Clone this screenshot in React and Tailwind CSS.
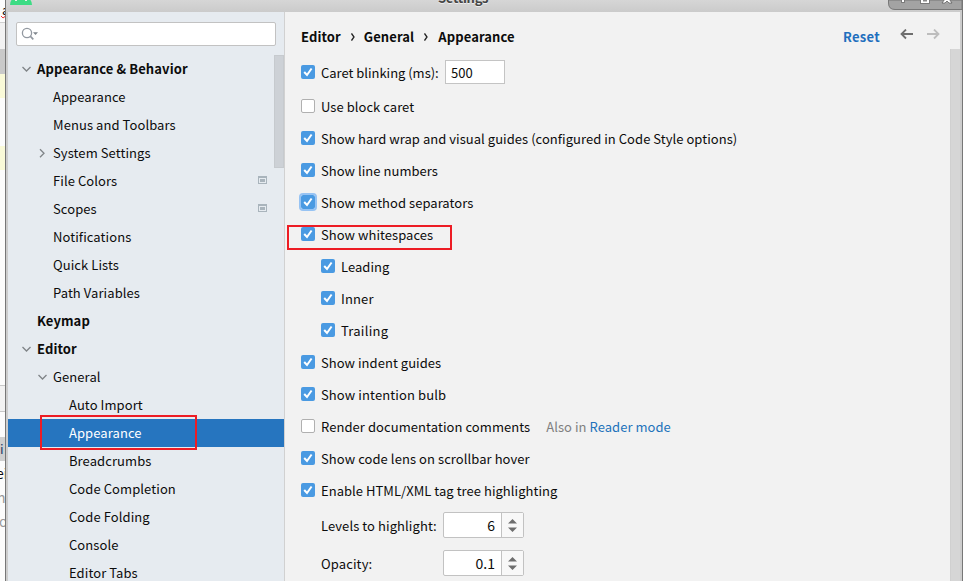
import React from "react";

const tree = [
  { label: "Appearance & Behavior", level: 0, arrow: "down", bold: true },
  { label: "Appearance", level: 1 },
  { label: "Menus and Toolbars", level: 1 },
  { label: "System Settings", level: 1, arrow: "right" },
  { label: "File Colors", level: 1, project: true },
  { label: "Scopes", level: 1, project: true },
  { label: "Notifications", level: 1 },
  { label: "Quick Lists", level: 1 },
  { label: "Path Variables", level: 1 },
  { label: "Keymap", level: 0, bold: true },
  { label: "Editor", level: 0, arrow: "down", bold: true },
  { label: "General", level: 1, arrow: "down" },
  { label: "Auto Import", level: 2 },
  { label: "Appearance", level: 2, selected: true },
  { label: "Breadcrumbs", level: 2 },
  { label: "Code Completion", level: 2 },
  { label: "Code Folding", level: 2 },
  { label: "Console", level: 2 },
  { label: "Editor Tabs", level: 2 },
];

const options = [
  { label: "Use block caret", off: true },
  { label: "Show hard wrap and visual guides (configured in Code Style options)" },
  { label: "Show line numbers" },
  { label: "Show method separators", focus: true },
  { label: "Show whitespaces", marked: true },
  { label: "Leading", nested: true },
  { label: "Inner", nested: true, tracking: "tracking-[0.15px]" },
  { label: "Trailing", nested: true, tracking: "tracking-[0.25px]" },
  { label: "Show indent guides" },
  { label: "Show intention bulb", tracking: "tracking-[0.11px]" },
  { label: "Render documentation comments", off: true, reader: true, tracking: "tracking-[0.07px]" },
  { label: "Show code lens on scrollbar hover", tracking: "tracking-[0.07px]" },
  { label: "Enable HTML/XML tag tree highlighting" },
];

const indent = ["pl-[13px]", "pl-[29px]", "pl-[45px]"];

function Chevron({ dir }) {
  return (
    <svg className="h-[11px] w-[11px] shrink-0" viewBox="0 0 11 11" fill="none" stroke="#7f8487" strokeWidth="1.3">
      {dir === "down" && <path d="M1.5 3 L5.5 7 L9.5 3" />}
      {dir === "right" && <path d="M3 1.2 L7 5.2 L3 9.2" />}
    </svg>
  );
}

function TreeRow({ item }) {
  return (
    <div
      className={`relative flex h-7 shrink-0 items-center ${indent[item.level]} ${
        item.selected ? "bg-[#2675bf] text-white" : "text-[#0c0c0c]"
      }`}
    >
      <Chevron dir={item.arrow} />
      <span className={`ml-[5px] whitespace-nowrap leading-5 ${item.bold ? "font-bold tracking-[0.1px]" : "tracking-[0.08px]"}`}>
        {item.label}
      </span>
      {item.project && (
        <svg className="mr-[17px] mb-[2px] ml-auto h-2 w-[9px]" viewBox="0 0 9 8" shapeRendering="crispEdges">
          <rect width="9" height="8" fill="#a9b4bc" />
          <rect x="1" y="2" width="7" height="5" fill="#e6ebf0" />
          <rect x="2" y="3" width="5" height="3" fill="#a9b4bc" />
        </svg>
      )}
      {item.selected && <div className="absolute top-[-4px] left-8 h-[35px] w-[157px] border-2 border-[#ed1c24]" />}
    </div>
  );
}

function Check({ off, focus }) {
  if (off) return <span className="h-[14px] w-[14px] shrink-0 rounded-[2px] border border-[#b0b0b0] bg-white" />;
  return (
    <span
      className={`flex h-[14px] w-[14px] shrink-0 rounded-[2px] bg-[#4a9ae2] ${
        focus ? "outline-2 outline-[#97c3f3] outline-solid" : ""
      }`}
    >
      <svg className="h-[14px] w-[14px]" viewBox="0 0 14 14" fill="none" stroke="#fff" strokeWidth="2">
        <path d="M3.2 7 L6 10 L10.6 3.5" />
      </svg>
    </span>
  );
}

function Spinner({ value }) {
  return (
    <div className="flex h-[26px] w-[81px] rounded-[2px] border border-[#c2c2c2] bg-white">
      <span className="flex-1 border-r border-[#c2c2c2] pt-[2px] pr-[6px] text-right text-[14px] leading-5">{value}</span>
      <svg className="h-6 w-[21px] bg-[#f8f8f8]" viewBox="0 0 21 24" fill="#6e6e6e">
        <path d="M6 10.5 L10.5 6 L15 10.5 Z M6 14.5 L15 14.5 L10.5 19 Z" />
      </svg>
    </div>
  );
}

function Crumb() {
  return (
    <svg className="mx-[10px] h-2 w-1" viewBox="0 0 4 8" fill="none" stroke="#222" strokeWidth="1.3">
      <path d="M0.5 0.5 L3 4 L0.5 7.5" />
    </svg>
  );
}

/* Sliver of the editor window visible behind the dialog */
function EditorBehind() {
  return (
    <div className="flex w-[5px] shrink-0 flex-col overflow-hidden bg-[#fcfcfc] whitespace-nowrap">
      <div className="relative h-[22px] shrink-0 text-[13px] leading-5">
        <span className="absolute top-0 left-[2px]">a</span>
        <svg className="absolute top-[15px] left-[1px] h-[5px] w-[6px]" viewBox="0 0 6 5" fill="none" stroke="#ef3030">
          <path d="M0 1 L2 3 L4 1.5 L6 4" />
        </svg>
      </div>
      <div className="h-[27px] shrink-0 border-t border-[#d0d0d0] bg-[#f2f2f2]" />
      <div className="h-[25px] shrink-0 bg-[#c9c9c9]" />
      <div className="h-6 shrink-0 bg-[#fafad8]" />
      <div className="h-12 shrink-0" />
      <div className="h-6 shrink-0 bg-[#fafad8]" />
      <div className="h-[215px] shrink-0" />
      <div className="h-[27px] shrink-0 border-y border-[#c8c8c8] bg-[#f2f2f2]" />
      <div className="h-[25px] shrink-0" />
      <div className="h-6 shrink-0 bg-[#cfcfcf] text-[#1c3d66] leading-6">i</div>
      <div className="h-6 shrink-0 text-[14px] leading-6"><span className="-ml-[4px]">ei</span></div>
      <div className="h-6 shrink-0 text-[14px] text-[#999] leading-6"><span className="-ml-[3px]">n</span></div>
      <div className="h-6 shrink-0 text-[14px] text-[#999] leading-6"><span className="-ml-[1px]">o</span></div>
    </div>
  );
}

export default function App() {
  return (
    <div className="flex h-[581px] w-[963px] overflow-hidden bg-[#f2f2f2] font-['Noto_Sans_CJK_SC','Noto_Sans',sans-serif] text-[13px] text-[#0c0c0c]">
      <EditorBehind />
      <div className="flex min-w-0 flex-1 flex-col border-x border-[#777] bg-[#cdcdcd]">
        <header className="relative h-3 shrink-0 overflow-hidden bg-linear-to-b from-[#d6d6d6] to-[#cbcbcb]">
          <svg className="absolute top-0 left-1 h-[5px] w-[22px]" viewBox="0 0 22 5">
            <path d="M0 5 Q0 2 1.5 0 H20.5 Q22 2 22 5 Z" fill="#3ddc84" />
            <path d="M5 0 H7 V1 H5 Z M15 0 H17 V1 H15 Z" fill="#e5f5ec" />
          </svg>
          <span className="absolute top-[-12px] left-[432px] font-bold tracking-[-0.3px] text-[#444] leading-5 text-shadow-[0_1px_0_#eee]">Settings</span>
          <svg className="absolute top-0 right-0 h-[10px] w-[74px]" viewBox="0 0 74 10">
            <path d="M0.5 0 V3 Q0.5 9.5 7 9.5 H74 V0 Z" fill="#a3a3a3" stroke="#777" />
            <g fill="#fff" stroke="#555" strokeWidth="0.7">
              <path d="M13.5 -1 H16.5 V2.5 H13.5 Z" />
              <path d="M32.5 -1 H41.5 V3.5 H32.5 Z" />
              <path d="M54 3 L57 -1 H61 L64 3 H61 L59 1 L57 3 Z" />
            </g>
            <path d="M35 0 H39 V1.5 H35 Z" fill="#888" />
          </svg>
        </header>
        <div className="flex min-h-0 flex-1 pr-[2px] pl-[2px]">
          <aside className="relative flex w-[276px] shrink-0 flex-col overflow-hidden bg-[#e6ebf0]">
            <div className="mx-2 mt-[10px] mb-[9px] flex h-6 shrink-0 items-center rounded-[2px] border border-[#c2c2c2] bg-white pl-1">
              <svg className="h-[14px] w-[18px]" viewBox="0 0 18 14" fill="none" stroke="#9298a0" strokeWidth="1.3">
                <circle cx="6" cy="6" r="4.6" />
                <path d="M9.2 9.2 L12.3 12.3" strokeWidth="1.7" />
                <path d="M12 5.2 H17 L14.5 8 Z" fill="#7f868d" stroke="none" />
              </svg>
            </div>
            {tree.map((item, i) => (
              <TreeRow key={i} item={item} />
            ))}
            <div className="absolute top-[43px] right-0 h-[113px] w-[10px] border border-[#c6cace] bg-[#cdd1d6]" />
          </aside>
          <main className="flex min-w-0 flex-1 flex-col overflow-hidden border-l border-[#d1d1d1] bg-[#f2f2f2]">
            <div className="flex h-[37px] shrink-0 items-center pt-[13px] pl-4 font-bold tracking-[0.1px]">
              <span>Editor</span>
              <Crumb />
              <span className="-ml-px">General</span>
              <Crumb />
              <span>Appearance</span>
              <span className="mr-[20px] ml-auto text-[#1f6fbe] tracking-[0.3px]">Reset</span>
              <svg className="mr-[20px] mb-[6px] h-[11px] w-10" viewBox="0 0 40 11" fill="none" strokeWidth="1.8">
                <path d="M13 5 H1.5 M6 0.5 L1.5 5 L6 9.5" stroke="#6e6e6e" />
                <path d="M27 5 H38.5 M34 0.5 L38.5 5 L34 9.5" stroke="#bdbdbd" />
              </svg>
            </div>
            <div className="flex min-h-0 flex-1">
              <div className="flex min-w-0 flex-1 flex-col whitespace-nowrap pl-4 tracking-[0.04px]">
                <div className="flex h-[46px] shrink-0 items-center">
                  <Check />
                  <span className="mt-[2px] ml-[6px] w-[124px] tracking-[-0.02px]">Caret blinking (ms):</span>
                  <span className="h-6 w-[60px] border border-[#c4c4c4] bg-white pt-[2px] pl-[5px] leading-5">500</span>
                </div>
                <div className="-mt-[5px] flex flex-col">
                  {options.map((o) => (
                    <div key={o.label} className={`relative flex h-8 shrink-0 items-center ${o.nested ? "pl-5" : ""}`}>
                      <Check off={o.off} focus={o.focus} />
                      <span className={`mt-[2px] ml-[6px] leading-5 ${o.tracking || ""}`}>{o.label}</span>
                      {o.reader && (
                        <span className="mt-[2px] ml-4 text-[#808080] leading-5">
                          Also in <span className="text-[#2272bb]">Reader mode</span>
                        </span>
                      )}
                      {o.marked && (
                        <div className="absolute top-[7px] left-[-14px] h-[25px] w-[165px] border-2 border-[#ed1c24]" />
                      )}
                    </div>
                  ))}
                </div>
                <div className="mt-[6px] ml-5 flex flex-col gap-3">
                  <div className="flex items-center">
                    <span className="mt-[2px] w-[122px] tracking-[0.08px]">Levels to highlight:</span>
                    <Spinner value="6" />
                  </div>
                  <div className="flex items-center">
                    <span className="mt-[2px] w-[122px] tracking-[0.12px]">Opacity:</span>
                    <Spinner value="0.1" />
                  </div>
                </div>
              </div>
              <div className="w-[10px] shrink-0 border-l border-[#d0d0d0] bg-[#d6d6d6]" />
            </div>
          </main>
        </div>
      </div>
    </div>
  );
}
